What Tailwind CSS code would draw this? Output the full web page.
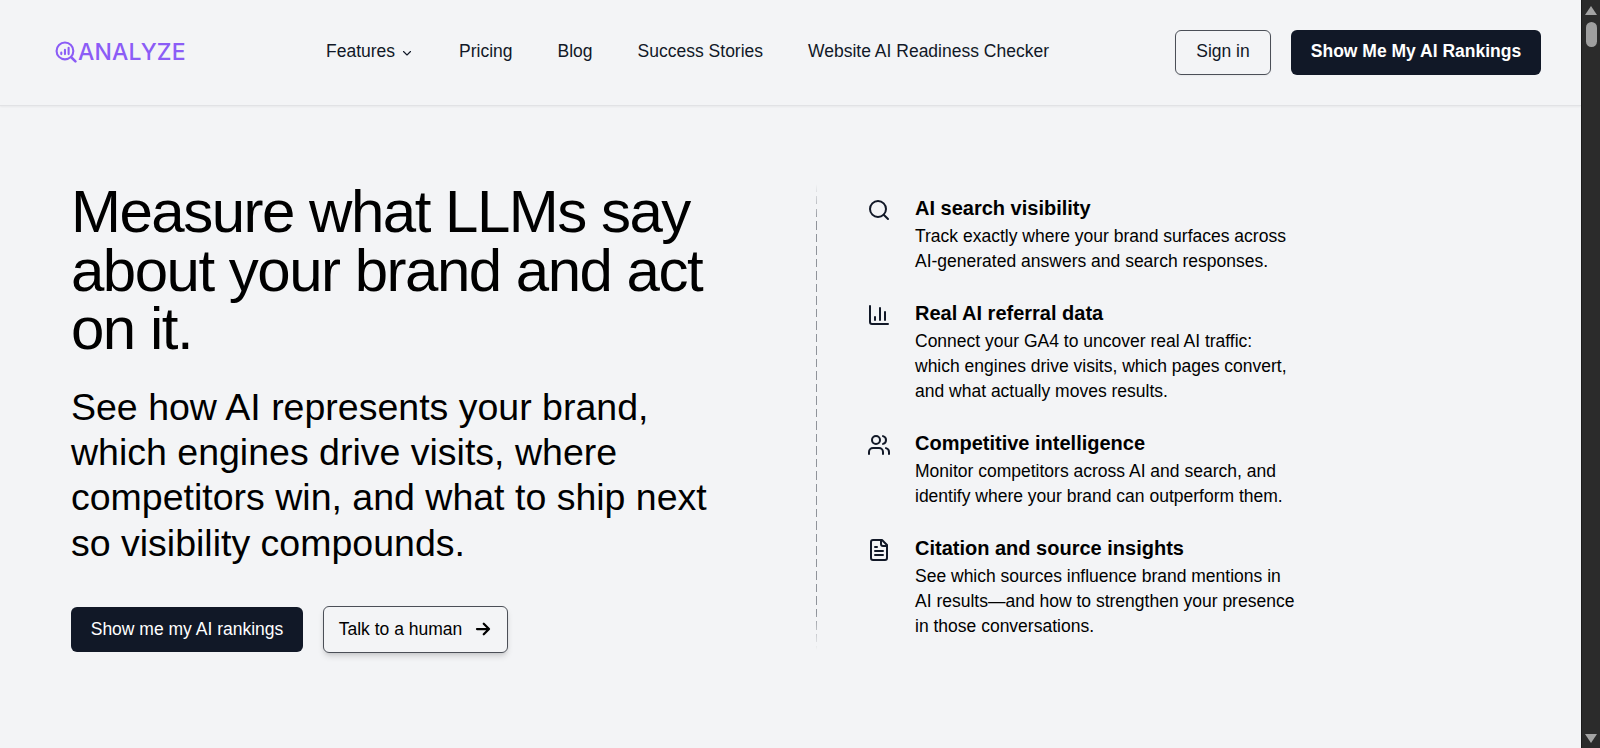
<!DOCTYPE html>
<html lang="en">
<head>
    <meta charset="UTF-8" />
    <meta name="viewport" content="width=device-width, initial-scale=1.0" />
    <title>Analyze</title>
    <script src="https://cdn.jsdelivr.net/npm/@tailwindcss/browser@4"></script>
</head>
<body class="h-screen overflow-hidden flex bg-[#f3f4f6] text-black font-['Liberation_Sans',Arial,sans-serif]">
<div class="flex-1 min-w-0">
    <!-- header -->
    <header class="h-[106px] flex items-center pl-[55px] pr-[40px] pb-[1px] border-b border-[#e1e2e5] shadow-[0_1px_2px_rgba(0,0,0,0.05)]">
        <a class="flex items-center w-[271px] text-[#8b5cf6]">
            <svg class="w-[22px] h-[22px]" viewBox="0 0 21 21" fill="none" stroke="currentColor" stroke-width="2" stroke-linecap="round">
                <circle cx="9.5" cy="9.5" r="8"/>
                <path d="M15.5 15.5 19.5 19.5" stroke-width="2.4"/>
                <path d="M6 12.5v-1.5M9.5 12.5v-4M13 12.5v-6" stroke-width="2"/>
            </svg>
            <span class="ml-[1px] text-[23px] leading-none font-medium tracking-[0.2px] font-['Inter',sans-serif]">ANALYZE</span>
        </a>
        <nav class="flex items-center text-[17.5px] text-[#111827] pb-[1px]">
            <a class="flex items-center mr-[46px]">Features
                <svg class="ml-[6px] w-[12px] h-[12px] mt-[2px]" viewBox="0 0 24 24" fill="none" stroke="currentColor" stroke-width="2.2" stroke-linecap="round" stroke-linejoin="round"><path d="m5 9 7 7 7-7"/></svg>
            </a>
            <a class="mr-[45px]">Pricing</a>
            <a class="mr-[45px]">Blog</a>
            <a class="mr-[45px]">Success Stories</a>
            <a>Website AI Readiness Checker</a>
        </nav>
        <div class="ml-auto flex items-center gap-[20px]">
            <button class="w-[96px] h-[45px] rounded-[6px] border border-[#4b4f57] text-[17.5px] text-[#111827] shadow-xs pb-[1px]">Sign in</button>
            <button class="w-[250px] h-[45px] rounded-[6px] bg-[#111827] text-white text-[17.5px] font-bold pb-[1px]">Show Me My AI Rankings</button>
        </div>
    </header>

    <!-- hero -->
    <main class="flex pl-[71px] pt-[77px]">
        <section class="w-[660px]">
            <h1 class="text-[60px] leading-[58.5px] tracking-[-1.5px]">Measure what LLMs say about your brand and act on it.</h1>
            <p class="mt-[26.5px] text-[37.5px] leading-[45.2px]">See how AI represents your brand, which engines drive visits, where competitors win, and what to ship next so visibility compounds.</p>
            <div class="mt-[40px] flex items-center gap-[20px]">
                <button class="w-[232px] h-[45px] rounded-[6px] bg-[#111827] text-white text-[17.5px]">Show me my AI rankings</button>
                <button class="w-[185px] h-[47px] rounded-[6px] border border-[#4b4f57] text-[17.5px] flex items-center justify-center shadow-[0_4px_6px_-1px_rgba(0,0,0,0.15),0_2px_4px_-2px_rgba(0,0,0,0.1)]">Talk to a human
                    <svg class="ml-[12px] w-[18px] h-[18px]" viewBox="0 0 24 24" fill="none" stroke="currentColor" stroke-width="3" stroke-linecap="round" stroke-linejoin="round"><path d="M4 12h16M13 5l7 7-7 7"/></svg>
                </button>
            </div>
        </section>

        <!-- dashed divider -->
        <div class="ml-[85px] mt-[1px] w-px h-[466px] bg-[repeating-linear-gradient(to_bottom,#8f939a_0,#8f939a_8px,transparent_8px,transparent_12.5px)] [mask-image:linear-gradient(to_bottom,transparent,black_8%,black_92%,transparent)]"></div>

        <!-- feature list -->
        <section class="ml-[50px] mt-[11px] flex flex-col gap-[25px]">
            <div class="flex gap-[24px]">
                <svg class="w-[24px] h-[24px] shrink-0 mt-[4px]" viewBox="0 0 24 24" fill="none" stroke="#111827" stroke-width="2" stroke-linecap="round"><circle cx="11" cy="11" r="8"/><path d="m21 21-4.3-4.3"/></svg>
                <div class="w-[384px]">
                    <h3 class="text-[20px] leading-[28px] font-bold">AI search visibility</h3>
                    <p class="mt-[2px] text-[17.5px] leading-[25px]">Track exactly where your brand surfaces across AI-generated answers and search responses.</p>
                </div>
            </div>
            <div class="flex gap-[24px]">
                <svg class="w-[24px] h-[24px] shrink-0 mt-[4px]" viewBox="0 0 24 24" fill="none" stroke="#111827" stroke-width="2" stroke-linecap="round" stroke-linejoin="round"><path d="M3 3v16a2 2 0 0 0 2 2h16"/><path d="M8 17v-3M13 17V5M18 17V9"/></svg>
                <div class="w-[384px]">
                    <h3 class="text-[20px] leading-[28px] font-bold">Real AI referral data</h3>
                    <p class="mt-[2px] text-[17.5px] leading-[25px]">Connect your GA4 to uncover real AI traffic: which engines drive visits, which pages convert, and what actually moves results.</p>
                </div>
            </div>
            <div class="flex gap-[24px]">
                <svg class="w-[24px] h-[24px] shrink-0 mt-[4px]" viewBox="0 0 24 24" fill="none" stroke="#111827" stroke-width="2" stroke-linecap="round" stroke-linejoin="round"><path d="M16 21v-2a4 4 0 0 0-4-4H6a4 4 0 0 0-4 4v2"/><circle cx="9" cy="7" r="4"/><path d="M22 21v-2a4 4 0 0 0-3-3.87"/><path d="M16 3.13a4 4 0 0 1 0 7.75"/></svg>
                <div class="w-[384px]">
                    <h3 class="text-[20px] leading-[28px] font-bold">Competitive intelligence</h3>
                    <p class="mt-[2px] text-[17.5px] leading-[25px]">Monitor competitors across AI and search, and identify where your brand can outperform them.</p>
                </div>
            </div>
            <div class="flex gap-[24px]">
                <svg class="w-[24px] h-[24px] shrink-0 mt-[4px]" viewBox="0 0 24 24" fill="none" stroke="#111827" stroke-width="2" stroke-linecap="round" stroke-linejoin="round"><path d="M15 2H6a2 2 0 0 0-2 2v16a2 2 0 0 0 2 2h12a2 2 0 0 0 2-2V7z"/><path d="M14 2v4a2 2 0 0 0 2 2h4"/><path d="M10 9H8M16 13H8M16 17H8"/></svg>
                <div class="w-[384px]">
                    <h3 class="text-[20px] leading-[28px] font-bold">Citation and source insights</h3>
                    <p class="mt-[2px] text-[17.5px] leading-[25px]">See which sources influence brand mentions in AI results—and how to strengthen your presence in those conversations.</p>
                </div>
            </div>
        </section>
    </main>
</div>

<!-- browser scrollbar -->
<div class="w-[19px] shrink-0 bg-[#2b2b2b] flex flex-col items-center justify-between pt-[6px] pb-[5px] border-l border-[#1c1c1c]">
    <div class="w-full flex flex-col items-center">
        <div class="w-0 h-0 border-x-[6px] border-x-transparent border-b-[9px] border-b-[#a3a3a3]"></div>
        <div class="w-[11px] h-[25px] mt-[7px] rounded-full bg-[#9f9f9f]"></div>
    </div>
    <div class="w-0 h-0 border-x-[6px] border-x-transparent border-t-[9px] border-t-[#a3a3a3]"></div>
</div>
</body>
</html>
